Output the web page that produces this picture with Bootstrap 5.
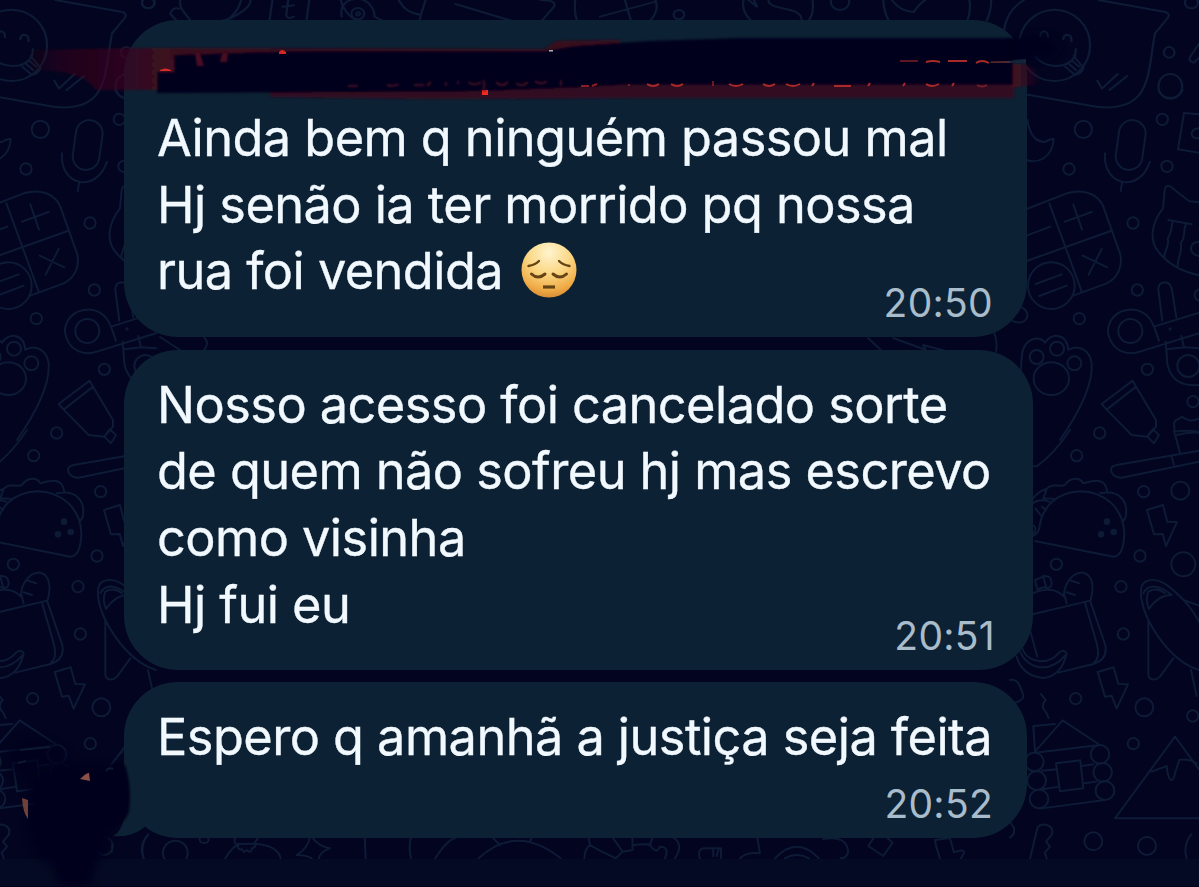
<!DOCTYPE html>
<html lang="pt-BR">
<head>
<meta charset="utf-8">
<meta name="viewport" content="width=device-width, initial-scale=1">
<title>Conversa</title>
<link rel="stylesheet" href="https://cdn.jsdelivr.net/npm/bootstrap@5.3.0/dist/css/bootstrap.min.css">
<style>
body{background:#020420;font-family:Inter,"Liberation Sans",sans-serif;overflow:hidden}
.chat{width:1199px;height:887px;padding:20px 0 0 124px}
.art{left:0;top:0;pointer-events:none}
.bubble{background:#0c2133;border-radius:54px;color:#f1f8fe;padding:21.5px 34px 0 33px;width:903px}
.bubble.first{height:317px;padding-top:85px}
.bubble.second{height:320px;width:909px;margin-top:13px}
.bubble.third{height:156px;margin-top:12px}
.ln{display:block;font-size:50.5px;line-height:66.7px;white-space:nowrap;height:66.7px;letter-spacing:-.56px;-webkit-text-stroke:.35px #f1f8fe}
.hour{font-size:39px;line-height:48px;color:#a9bccb;bottom:10.5px;right:34px;letter-spacing:.3px}
.second .hour{right:38px}
.emoji{width:56px;height:56px;vertical-align:-9px;margin-left:4.5px}
</style>
<script src="https://cdn.jsdelivr.net/npm/bootstrap@5.3.0/dist/js/bootstrap.bundle.min.js"></script>
</head>
<body>
<main class="chat position-relative overflow-hidden d-flex flex-column">
<!-- doodle wallpaper -->
<svg class="art position-absolute" width="1199" height="887" viewBox="0 0 1199 887" fill="none" stroke="#0d1b36" stroke-linecap="round" stroke-linejoin="round">
<defs>
<g id="tile">
<g transform="translate(600 0) scale(.382 .3333)" stroke-width="6">
<ellipse cx="1190" cy="136" rx="93" ry="107"/>
<path d="M1305 0L1480 36Q1494 42 1486 54L1453 100C1440 170 1442 260 1400 298Q1365 330 1300 320L1120 284M1057 95C1062 50 1080 20 1110 0M1153 108Q1152 94 1163 94Q1173 96 1173 112M1213 118Q1213 104 1224 104Q1236 106 1234 124M1140 170C1165 206 1220 208 1243 170L1246 148M1218 200L1242 224Q1256 226 1266 204L1240 168M1228 192L1246 210M1236 182L1254 200M1302 242L1314 266L1355 222M1334 270L1380 228"/>
<ellipse cx="1490" cy="157" rx="14" ry="16"/><ellipse cx="1493" cy="259" rx="31" ry="37"/><circle cx="1548" cy="8" r="17"/>
<path d="M1575 120L1545 170Q1540 185 1555 188L1575 165"/>
</g>
<g transform="translate(1010 90) scale(.3333)" stroke-width="6">
<path d="M445 0Q455 24 483 24Q508 22 518 0"/>
<circle cx="220" cy="118" r="26"/><circle cx="177" cy="237" r="17"/><circle cx="457" cy="88" r="17"/><circle cx="471" cy="229" r="17"/>
<rect x="322" y="90" width="80" height="150" rx="40" transform="rotate(8 362 165)"/>
<path d="M285 190C278 290 390 310 420 215M337 275L332 303M52 90C60 140 80 156 105 156Q118 146 131 147C128 205 80 222 50 210M567 73L522 69L504 178L567 188M567 115Q545 116 545 134Q550 148 567 144"/>
<path d="M50 357L170 310C230 292 268 320 280 350L330 490C340 530 322 565 290 580L190 617M118 340L215 604M50 513L302 423M50 437L121 410M165 395L245 366M190 343L216 419M218 497L292 532M275 477L236 554"/>
<circle cx="124" cy="587" r="70"/><path d="M77 582L155 553M88 618L170 587M8 693C55 712 65 665 35 652"/>
<circle cx="369" cy="399" r="17"/><circle cx="382" cy="600" r="17"/><circle cx="208" cy="686" r="17"/><circle cx="412" cy="838" r="17"/><circle cx="549" cy="935" r="17"/><circle cx="269" cy="1029" r="17"/><circle cx="571" cy="615" r="17"/>
<path d="M567 337L538 334L480 289Q467 284 464 300L459 355C420 405 420 455 445 485C480 530 530 548 567 556M475 390L545 403M488 395C482 420 485 430 473 445C480 470 462 480 463 502M527 405C517 430 528 445 512 458C519 485 502 500 503 530M567 455Q543 456 543 476Q545 495 567 498"/>
<path d="M432 710C415 665 380 655 350 660C305 668 285 710 298 742C310 782 350 798 390 785L567 730M432 710L567 668M432 710L447 752M457 692L445 600Q445 578 463 577Q482 577 486 600L499 682M514 738L522 772M467 755L472 820C480 865 510 890 567 885M470 778L525 772L567 775"/>
<circle cx="361" cy="723" r="36"/><circle cx="535" cy="828" r="33"/><circle cx="480" cy="717" r="2"/>
<path d="M33 840C35 800 32 760 70 747Q92 742 105 758C120 730 170 725 175 780C205 762 240 780 245 820C250 890 195 985 150 1050"/>
<circle cx="80" cy="801" r="21"/><circle cx="141" cy="776" r="21"/><circle cx="193" cy="820" r="21"/><ellipse cx="124" cy="866" rx="53" ry="49"/>
<path d="M275 942L368 872L378 890L290 959ZM290 959L365 1035L412 1040L438 1010V990L378 890M412 1040L428 1018L447 1035L432 1060ZM567 985C540 1000 525 985 515 980C510 990 495 985 492 1000C495 1020 490 1030 497 1040L510 1090M492 1025Q530 1020 567 1025"/>
</g>
<g transform="translate(1010 430) scale(.3333)" stroke-width="6">
<circle cx="200" cy="77" r="17"/><circle cx="401" cy="185" r="17"/><circle cx="511" cy="182" r="27"/><circle cx="390" cy="378" r="17"/><circle cx="520" cy="403" r="36"/><circle cx="139" cy="403" r="17"/><circle cx="333" cy="470" r="17"/><circle cx="340" cy="612" r="17"/><circle cx="197" cy="806" r="17"/><circle cx="403" cy="832" r="27"/><circle cx="548" cy="858" r="17"/><circle cx="370" cy="941" r="17"/><circle cx="250" cy="1234" r="27"/><circle cx="411" cy="1248" r="27"/>
<path d="M180 0C150 45 115 85 80 109H60M567 62L320 105Q300 108 304 125Q312 144 335 143L567 95M484 76L492 104M500 15Q535 5 567 8"/>
<path d="M75 333L310 380C335 380 342 350 343 310C340 235 285 185 210 184C140 187 95 230 88 295Q82 312 68 318M68 208C82 185 100 180 110 177C125 158 145 172 165 165C182 140 210 142 220 160C245 152 285 140 292 184M270 190C330 178 356 215 347 262L338 275M110 177L100 205L130 206M68 220Q88 205 118 215M76 235L94 258M96 230L108 240M68 285Q85 295 68 312"/>
<g fill="#0d1b36"><circle cx="291" cy="275" r="7"/><circle cx="273" cy="313" r="7"/><circle cx="311" cy="306" r="7"/></g>
<path d="M411 240L459 225L472 275L501 276L468 348L458 312L432 313ZM263 726L311 712L325 762L354 763L320 836L305 797L285 800Z"/>
<path d="M68 553L240 512L286 645C292 680 275 695 250 702L145 728M225 518L260 640C268 670 265 688 252 698M68 490C110 470 145 480 162 500C160 460 190 425 220 428C250 435 252 475 242 510M162 490L170 520M183 452L207 460M170 487L195 495M75 450L100 440L108 470L82 478ZM100 438Q124 435 125 460Q125 475 108 474M60 600L82 680M35 650C45 695 110 710 145 670Q160 655 170 670C160 720 130 742 100 744C55 740 30 715 20 680M30 665C55 720 120 730 165 677"/>
<path d="M567 720C500 700 445 630 415 570C395 530 385 480 400 460C430 435 470 460 500 490Q540 525 567 575M400 490C415 460 450 465 485 495Q445 495 417 537Q405 510 415 485Q440 470 465 490M415 570V735C420 755 440 750 450 740L490 685M520 510L567 527M543 720L560 798"/>
<path d="M0 750Q18 745 28 765L40 795Q42 810 15 818M92 792L107 810Q90 830 107 845L116 864M75 965L158 871L270 945M75 965L70 888L135 882M75 968L270 945M95 1022L140 1018M215 1008L250 1003M98 1078L148 1070M222 1060L260 1055M90 1136L285 1110M138 1000L211 991L220 1075L150 1084Z"/>
<circle cx="73" cy="996" r="28"/><circle cx="80" cy="1052" r="28"/><circle cx="87" cy="1107" r="28"/><circle cx="270" cy="973" r="28"/><circle cx="278" cy="1027" r="28"/><circle cx="285" cy="1082" r="28"/>
<path d="M567 1165H315L495 920L567 1018M425 1025L470 1008C475 1060 490 1060 495 1030L508 990Q535 985 560 1000M60 1286L82 1195Q90 1178 115 1187Q132 1195 125 1215L108 1235L120 1250L104 1268L110 1285M544 1213Q518 1245 530 1286M0 1222Q15 1215 12 1195L3 1180"/>
</g>
</g>
</defs>
<use href="#tile"/><use href="#tile" x="-1043"/>
<!-- doodles above the first message -->
<g transform="scale(.3827 .3333)" stroke-width="6">
<circle cx="387" cy="8" r="16"/><path d="M471 0C468 20 475 30 497 60M445 42Q450 20 468 26M445 42L460 60M655 0C655 25 610 55 580 62M630 0Q625 30 595 60M712 0L704 62M808 0L801 62M753 0L748 45Q750 60 768 50M738 20L768 16M890 0C900 40 920 55 932 62M893 50C885 5 920 -10 950 0C975 15 980 40 978 50L1000 62M1042 0Q1060 40 1100 44L1112 0M1100 44L1096 62M1190 12L1335 62M1412 0Q1455 0 1448 20L1416 62M1503 0Q1500 40 1508 62"/><circle cx="935" cy="41" r="17"/><path d="M930 42Q935 30 942 42Q935 52 930 42"/>
<g transform="translate(1568 0)"><circle cx="206" cy="44" r="14"/><circle cx="627" cy="6" r="24"/><path d="M0 50L145 5M65 0L80 60M145 0Q155 35 130 62M375 0C370 25 380 48 395 62M388 0L410 20L402 0M440 0C440 35 525 15 527 60M555 0Q560 40 545 62M740 0Q742 40 755 62M762 0Q785 35 820 36Q835 10 850 0M965 0Q970 30 960 62M1022 0Q1022 35 1010 62"/></g>
</g>
<!-- strip between the first two messages -->
<path stroke-width="2" d="M868 338L881 350M893 338L926 350L923 345L946 351M994 332Q998 342 996 351M160 337L180 350M204 337Q210 343 204 350"/>
<!-- doodles below the last message -->
<g transform="translate(100 820) scale(.3333)" stroke-width="6">
<path d="M36 70V95M143 46Q115 75 131 115M300 50Q295 70 315 69Q330 67 324 50M376 115Q400 75 420 72Q530 65 542 115M405 52Q400 75 415 72Q410 92 427 88Q430 103 440 90Q455 102 455 85Q470 82 465 68L475 52M630 50Q625 85 590 105Q620 105 635 115M634 50Q660 82 690 85Q660 95 657 115M794 52L797 115M933 52Q925 85 933 115M1006 115Q1040 60 1068 53M1136 115Q1250 10 1382 115M1175 50L1200 75M1297 50L1290 64M1453 115Q1455 85 1470 75L1465 50M1470 75L1500 92"/><circle cx="226" cy="99" r="37"/>
<g transform="translate(1500 0)"><path d="M0 92L48 115L68 95L40 55M68 95L98 90L97 52M98 76Q140 70 150 75Q170 105 180 80Q210 80 195 115M150 75L158 52M215 50Q255 70 225 115M300 115Q290 85 315 85H363V115M340 85V108M357 85L350 108M420 115Q440 95 480 100L472 52M525 115Q590 45 657 115M555 115Q590 95 627 115M670 57Q740 45 745 95Q740 115 722 115M822 52L805 78L850 108L878 68L860 52M1020 115Q1008 80 1005 60L1050 54L1062 97Q1095 85 1092 100Q1085 112 1083 115"/></g>
</g>
<rect x="0" y="859" width="1199" height="27" fill="#040a23" stroke="none"/><rect y="886" width="1199" height="1" fill="#01021c" stroke="none"/>
<!-- tail of the last bubble -->
<path d="M124 785Q129 828 113 836Q131 838 145 827Z" fill="#0c2133" stroke="none"/>
</svg>

<section class="bubble first position-relative d-flex flex-column">
<span class="ln">Ainda bem q ninguém passou mal</span>
<span class="ln">Hj senão ia ter morrido pq nossa</span>
<span class="ln">rua foi vendida <svg class="emoji" viewBox="0 0 56 56" role="img" aria-label="rosto pensativo"><defs><radialGradient id="face" cx=".5" cy=".18" r=".85"><stop offset="0" stop-color="#fff4cf"/><stop offset=".45" stop-color="#fbd886"/><stop offset=".8" stop-color="#f0ad48"/><stop offset="1" stop-color="#d88730"/></radialGradient></defs><circle cx="28" cy="28" r="27.500" fill="url(#face)"/><g fill="none" stroke="#664315" stroke-width="2.400" stroke-linecap="round"><path d="M7.500 24Q14 23 18 19M48.500 24Q42 23 38 19"/><path d="M10.500 32Q17 38 24 32M32 32Q39 38 45.500 32" stroke-width="3"/><path d="M22 45H34" stroke-linecap="butt" stroke-width="3.200"/></g></svg></span>
<time class="hour position-absolute">20:50</time>
</section>
<section class="bubble second position-relative d-flex flex-column">
<span class="ln">Nosso acesso foi cancelado sorte</span>
<span class="ln">de quem não sofreu hj mas escrevo</span>
<span class="ln">como visinha</span>
<span class="ln">Hj fui eu</span>
<time class="hour position-absolute">20:51</time>
</section>
<section class="bubble third position-relative d-flex flex-column">
<span class="ln">Espero q amanhã a justiça seja feita</span>
<time class="hour position-absolute">20:52</time>
</section>

<!-- scribbles over the sender's name and avatar -->
<svg class="art position-absolute" width="1199" height="887" viewBox="0 0 1199 887" aria-hidden="true">
<defs>
<filter id="soft" x="-20%" y="-20%" width="140%" height="140%"><feGaussianBlur stdDeviation="1"/></filter>
<filter id="wide" x="-30%" y="-30%" width="160%" height="160%"><feGaussianBlur stdDeviation="4"/></filter>
<linearGradient id="fadeL"><stop offset="0" stop-color="#4a0717" stop-opacity="0.1"/><stop offset=".25" stop-color="#43081b" stop-opacity=".45"/><stop offset=".7" stop-color="#43081b" stop-opacity=".65"/><stop offset="1" stop-color="#470a1c" stop-opacity=".9"/></linearGradient>
<linearGradient id="fadeR"><stop offset="0" stop-color="#4a0a1b"/><stop offset="1" stop-color="#4a0a1b" stop-opacity="0"/></linearGradient>
</defs>
<g filter="url(#soft)">
<path d="M30 50L130 48H178V90H95Q85 70 30 70Z" fill="url(#fadeL)"/>
<path d="M170 48L545 49L556 41L620 40V60H170Z" fill="#380a1e"/>
<path d="M270 90L600 84H1014V98H640L430 99L270 97Z" fill="#330a20"/>
<path d="M1010 64H1024Q1042 70 1041 84L1012 88Z" fill="url(#fadeR)"/>
<path d="M174 55L300 51L545 51L575 46L650 41L740 38H1010L1030 40V60H1013V85H620Q500 92 400 92L157 93V72H174Z" fill="#01011d"/>
</g>
<ellipse cx="1036" cy="47" rx="22" ry="12" fill="#01021d" filter="url(#wide)" opacity=".85"/>
<path d="M990 62Q1010 61 1026 59V63H990Z" fill="#152338"/>
<path d="M160 70Q165 67 171 70V71H160Z" fill="#d52b2c"/><path d="M279 52Q282 48 286 52V54H279Z" fill="#d52628"/><rect x="482" y="90" width="6" height="5" fill="#f02b20"/><rect x="549" y="50" width="4" height="1.500" fill="#a8b5bd"/>
<path d="M195 53L197 66L204 66L200 53ZM222 53L220 62L227 62L228 53Z" fill="#4b0b20" filter="url(#soft)"/>
<g fill="none" stroke="#a92a28" stroke-width="2"><path d="M900 61H918" opacity=".55"/><path d="M926 62Q933 60 940 62M948 61H967M976 63Q982 59 989 63"/><path d="M991 62H1010" opacity=".4"/>
<path d="M647 84Q653 88 659 84M671 84Q677 88 683 84M729 84Q736 88 743 84M763 84Q769 88 775 84M786 84Q793 88 800 84M812 86L814 83M834 86H851M868 86L870 83M903 86L905 83M926 84Q932 88 939 84M952 86L954 83"/><path d="M713 81V86M628 85H630M977 85Q982 88 987 85" opacity=".6"/></g>
<!-- smudged remains of the name, all strokes too low to read -->
<g fill="none" stroke="#380a20" stroke-width="2.500" filter="url(#soft)"><path d="M348 86H358M387 85Q393 87 399 84M414 85H424M427 86L431 82M446 86V82M458 84V81M468 82Q475 87 481 82M484 80V91M496 82Q502 88 508 82M516 83Q522 88 528 82M535 81Q541 86 547 81M561 86V80"/></g>
<path d="M581 86H589M592 86L597 84" stroke="#8c1d24" stroke-width="2"/>
<g filter="url(#wide)" fill="#00011c"><ellipse cx="40" cy="762" rx="35" ry="24" transform="rotate(18 40 762)" opacity=".7"/><path d="M28 780L60 765H110V840L100 862Q65 880 38 858L28 835Z"/><rect x="55" y="850" width="40" height="38" rx="15"/></g>
<path d="M108 768Q117 758 125 765Q132 785 129 812Q124 824 112 829L100 830V775Z" fill="#01021c" filter="url(#soft)"/>
<path d="M20 750L50 747M18 763L26 761M106 771Q109 767 113 769M118 756L123 751" stroke="#0d1930" stroke-width="2" fill="none"/>
<path d="M80 779Q87 772 89 773L90 781Z" fill="#885047"/><path d="M22 798L28 800V819Q23 813 22 798Z" fill="#704038"/>
</svg>
</main>
</body>
</html>
